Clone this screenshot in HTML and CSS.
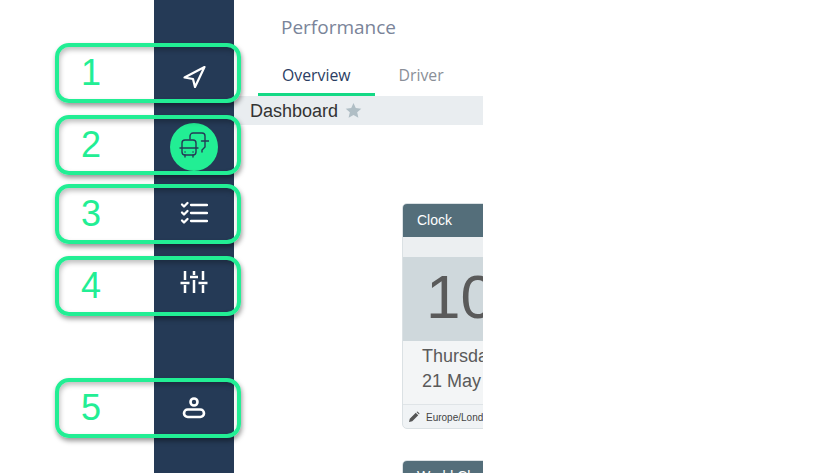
FILE: index.html
```html
<!DOCTYPE html>
<html lang="en">
<head>
<meta charset="utf-8">
<title>Performance</title>
<link rel="stylesheet" href="styles.css">
</head>
<body>
<div class="page">
  <div class="gutter"></div>
  <nav class="sidebar">
    <div class="nav-item nav-first">
      <svg class="icon" width="24" height="24" viewBox="0 0 24 24" fill="none" stroke="#fff" stroke-width="2.200" stroke-linejoin="round" stroke-linecap="round"><path d="M22.500 2 2.500 12.500 11 14 13 22Z"/></svg>
    </div>
    <div class="nav-item nav-gap-l">
      <span class="bubble">
        <svg width="30" height="30" viewBox="0 0 30 30" fill="none" stroke="#253a56" stroke-width="1.400" stroke-linecap="round" stroke-linejoin="round">
          <rect x="3" y="8" width="14" height="15" rx="3"/>
          <path d="M1 16H19M6 23v2M14 23v2"/>
          <path d="M11 7V4a3 3 0 0 1 3-3h9a3 3 0 0 1 3 3v5M22.500 9H30M26 9v6l-3 3v2"/>
          <path d="M6 20h.1M14 20h.1"/>
        </svg>
      </span>
    </div>
    <div class="nav-item nav-gap-s">
      <svg class="icon" width="28" height="24" viewBox="0 0 28 24" fill="none" stroke="#fff" stroke-width="2.300" stroke-linecap="round" stroke-linejoin="round"><path d="M11 4H27M11 12H27M11 20H27"/><path d="M2 3.500 4 5.500 7.500 2M2 11.500 4 13.500 7.500 10M2 19.500 4 21.500 7.500 18"/></svg>
    </div>
    <div class="nav-item nav-gap-l">
      <svg class="icon" width="28" height="24" viewBox="0 0 28 24" fill="none" stroke="#fff" stroke-width="2.500"><path d="M5 0V9M5 14V22M14 0V4M14 9V22M23 0V9M23 14V22M.5 12H9.500M10 6H18M18.500 12H27.500"/></svg>
    </div>
    <div class="nav-item nav-bottom">
      <svg class="icon" width="26" height="26" viewBox="0 0 26 26" fill="none" stroke="#fff" stroke-width="2.600"><circle cx="13" cy="8" r="3.500"/><rect x="3" y="15.500" width="20" height="7.500" rx="3.750"/></svg>
    </div>
  </nav>
  <main class="content">
    <h1 class="title">Performance</h1>
    <div class="tabs">
      <div class="tab tab-active">Overview</div>
      <div class="tab">Driver</div>
    </div>
    <div class="crumb">
      <span>Dashboard</span>
      <svg width="17" height="17" viewBox="0 0 24 24" fill="#b0bec5"><path d="M12 1.500 15.200 8.600 23 9.400 17.200 14.600 18.900 22.300 12 18.300 5.100 22.300 6.800 14.600 1 9.400 8.800 8.600Z"/></svg>
    </div>
    <section class="card">
      <div class="card-head">Clock</div>
      <div class="card-strip"></div>
      <div class="card-time">10</div>
      <div class="card-date">
        <div>Thursday</div>
        <div>21 May 2020</div>
      </div>
      <div class="card-foot">
        <svg width="12" height="12" viewBox="0 0 24 24" fill="#555"><path d="M2 22 3.500 15.500 15.500 3.500 20.500 8.500 8.500 20.500ZM17 2 19 1 23 5 22 7 Z"/></svg>
        <span>Europe/London</span>
      </div>
    </section>
    <section class="card card-next">
      <div class="card-head card-head-next">World Clock</div>
    </section>
  </main>
  <div class="callout callout-1"><span>1</span></div>
  <div class="callout callout-2"><span>2</span></div>
  <div class="callout callout-3"><span>3</span></div>
  <div class="callout callout-4"><span>4</span></div>
  <div class="callout callout-5"><span>5</span></div>
</div>
</body>
</html>
```
FILE: styles.css
```css
html, body {
  margin: 0;
  padding: 0;
  background: #fff;
  overflow: hidden;
}
.page {
  position: relative;
  display: flex;
  width: 823px;
  height: 473px;
  overflow: hidden;
  font-family: "Liberation Sans", Arial, sans-serif;
}
.gutter {
  width: 154px;
  flex: none;
}
.sidebar {
  width: 80px;
  flex: none;
  background: #253a56;
  display: flex;
  flex-direction: column;
  align-items: center;
  padding-top: 49px;
  box-sizing: border-box;
}
.nav-item {
  height: 56px;
  flex: none;
  width: 100%;
  display: flex;
  align-items: center;
  justify-content: center;
}
.nav-gap-l { margin-top: 14px; }
.nav-gap-s { margin-top: 10px; }
.nav-bottom { margin-top: 68px; }
.bubble {
  width: 48px;
  height: 48px;
  border-radius: 50%;
  background: #22ee94;
  display: flex;
  align-items: center;
  justify-content: center;
}
.content {
  width: 249px;
  flex: none;
  overflow: hidden;
}
.title {
  margin: 15px 0 0 47px;
  font: 400 19px/24px "Open Sans", sans-serif;
  color: #7a8499;
  white-space: nowrap;
}
.tabs {
  display: flex;
  margin: 15px 0 0 24px;
  height: 42px;
  box-sizing: border-box;
}
.tab {
  padding: 12px 24px 0;
  font: 400 15.800px/18px "Open Sans", sans-serif;
  color: #8a8f98;
}
.tab-active {
  color: #2b3d63;
  border-bottom: 3px solid #14d985;
}
.crumb {
  height: 29px;
  background: #e9edf0;
  padding-left: 16px;
  display: flex;
  align-items: center;
  gap: 7px;
  font: 400 18px/24px "Liberation Sans", sans-serif;
  color: #333;
}
.card {
  margin: 78px 0 0 168px;
  width: 200px;
  height: 226px;
  border: 1px solid #dbe1e4;
  border-radius: 5px;
  box-sizing: border-box;
  background: #f0f3f5;
  overflow: hidden;
}
.card-next {
  margin-top: 31px;
  height: 60px;
  background: #fff;
}
.card-head {
  height: 34px;
  background: #546e7a;
  color: #fff;
  font-size: 14px;
  line-height: 34px;
  padding-left: 15px;
  margin: -1px -1px 0;
}
.card-head-next {
  line-height: 32px;
}
.card-strip {
  height: 20px;
  background: #eceff1;
}
.card-time {
  height: 84px;
  background: #cfd8dc;
  color: #5a5a5a;
  font-size: 62px;
  line-height: 80px;
  padding-left: 23px;
  box-sizing: border-box;
}
.card-date {
  height: 64px;
  padding: 3px 0 0 19px;
  box-sizing: border-box;
  color: #5a5a5a;
  font-size: 18px;
  line-height: 25px;
  white-space: nowrap;
  background: #f3f5f6;
  border-bottom: 1px solid #dfe4e7;
}
.card-foot {
  display: flex;
  align-items: center;
  gap: 6px;
  padding: 6px 0 0 5px;
  font-size: 10px;
  color: #444;
  white-space: nowrap;
}
.callout {
  position: absolute;
  left: 55px;
  width: 186px;
  height: 60px;
  box-sizing: border-box;
  border: 4px solid #22ee94;
  border-radius: 14px;
  box-shadow: 1px 3px 5px rgba(0, 0, 0, .4), inset 1px 3px 5px rgba(0, 0, 0, .25);
  color: #22ee94;
  font-size: 36px;
  line-height: 52px;
}
.callout span {
  margin-left: 22px;
}
.callout-1 { top: 43px; }
.callout-2 { top: 115px; }
.callout-3 { top: 184px; }
.callout-4 { top: 256px; }
.callout-5 { top: 378px; }
```
